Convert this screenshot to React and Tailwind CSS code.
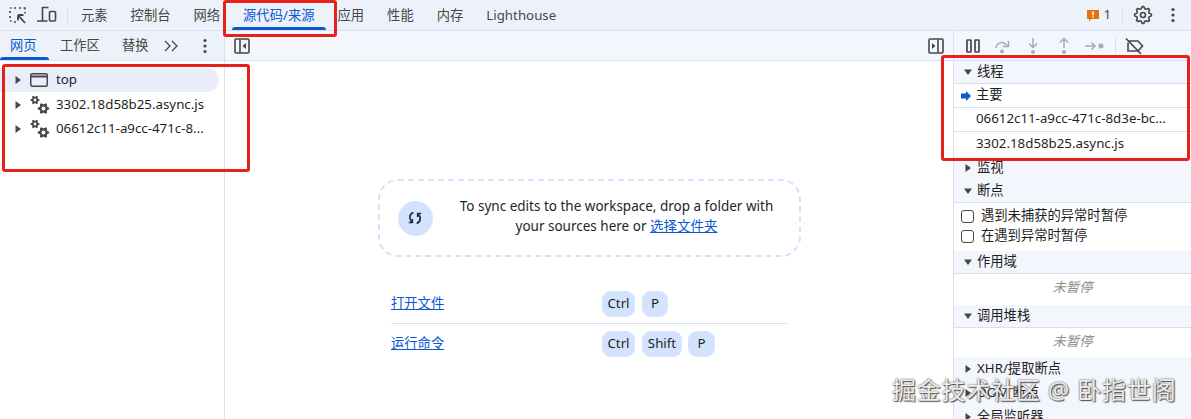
const FONT = "font-['Noto_Sans','Noto_Sans_CJK_SC',sans-serif]";

const topTabs = [
  { label: '元素' },
  { label: '控制台' },
  { label: '网络' },
  { label: '源代码/来源', active: true },
  { label: '应用' },
  { label: '性能' },
  { label: '内存' },
  { label: 'Lighthouse' },
];

// toothed wheel outline, used for the settings gear and the tree icons
const gearPath = (cx, cy, outer, inner, teeth) => {
  const pts = [];
  for (let i = 0; i < teeth * 4; i++) {
    const r = i % 4 < 2 ? outer : inner;
    const a = ((i - 0.5) / (teeth * 4)) * Math.PI * 2;
    pts.push(`${(cx + r * Math.cos(a)).toFixed(2)} ${(cy + r * Math.sin(a)).toFixed(2)}`);
  }
  return `M${pts.join('L')}Z`;
};

function Dots({ className = '' }) {
  return (
    <svg width="4" height="16" viewBox="0 0 4 16" className={`shrink-0 ${className}`} fill="#474747">
      <circle cx="2" cy="2.5" r="1.6" />
      <circle cx="2" cy="8" r="1.6" />
      <circle cx="2" cy="13.5" r="1.6" />
    </svg>
  );
}

function Caret({ open = false }) {
  return (
    <svg width="8" height="8" viewBox="0 0 8 8" fill="#474747" className="shrink-0">
      {open ? <path d="M0 1.5h8L4 7z" /> : <path d="M1.5 0v8L7 4z" />}
    </svg>
  );
}

function Gears() {
  return (
    <svg width="20" height="20" viewBox="0 0 20 20" className="shrink-0" fill="none" stroke="#474747">
      <path d={gearPath(5, 5, 4.6, 3.2, 6)} fill="#474747" stroke="none" />
      <circle cx="5" cy="5" r="1.4" fill="#fff" stroke="none" />
      <path d={gearPath(13.5, 13.5, 5.8, 4.2, 6)} fill="#474747" stroke="none" />
      <circle cx="13.5" cy="13.5" r="2" fill="#fff" stroke="none" />
    </svg>
  );
}

function TreeRow({ label, icon, active }) {
  return (
    <div className={`flex h-6 items-center pl-[14px] ${active ? 'mb-px w-[219px] rounded-r-full bg-[#e9eef9]' : ''}`}>
      <Caret />
      <div className="ml-[8px] flex w-[26px]">{icon}</div>
      <span className="truncate pb-px">{label}</span>
    </div>
  );
}

function SectionHead({ label, open, short }) {
  return (
    <div className={`flex shrink-0 items-center bg-[#f3f6fc] pl-[10px] ${short ? 'h-[23px]' : 'h-6'} ${open ? 'border-b border-[#d9dfee]' : ''}`}>
      <Caret open={open} />
      <span className="ml-[5px] pb-px">{label}</span>
    </div>
  );
}

function Key({ width, children }) {
  return <span className={`flex h-[26px] items-center justify-center rounded-[9px] bg-[#d3e3fd] text-[#1f1f1f] ${width}`}>{children}</span>;
}

function CheckRow({ label }) {
  return (
    <div className="flex h-[20px] items-center pl-[7px]">
      <span className="h-[13px] w-[13px] rounded-[3px] border border-[#474747]" />
      <span className="ml-[7px]">{label}</span>
    </div>
  );
}

export default function App() {
  return (
    <div className={`relative flex h-[419px] w-[1191px] flex-col overflow-hidden bg-white text-[13.3px] text-[#1f1f1f] ${FONT}`}>
      {/* main toolbar */}
      <div className="flex h-[31px] shrink-0 items-center border-b border-[#d9dfee] bg-[#edf2fa]">
        <div className="flex w-[69.5px] shrink-0 items-center pl-[9px] text-[#474747]">
          <svg width="18" height="18" viewBox="0 0 18 18" fill="none" stroke="currentColor" strokeWidth="1.6" className="shrink-0">
            <path d="M1 2h1.500M5 2h2M10 2h2M14.500 2H16v1.500M1 5v2M1 10v2M1 15h1.500M5 16h2M16 6v1.500" />
            <path d="M9 9l7 8M9 9v5.500M9 9h5.500" strokeWidth="1.800" />
          </svg>
          <svg width="20" height="18" viewBox="0 0 20 18" fill="none" stroke="currentColor" strokeWidth="1.6" className="ml-[10px] shrink-0">
            <path d="M11.500 1.500H5.500V15M0 15h10.500" />
            <rect x="12.500" y="5.500" width="6" height="9.500" rx="1" />
          </svg>
          <span className="ml-[10px] h-4 w-px shrink-0 bg-[#d9dfee]" />
        </div>
        {topTabs.map(t => (
          <div key={t.label} className={`relative flex h-[30px] items-center px-[11.5px] pt-[2px] ${t.active ? 'text-[#0b57d0]' : 'text-[#474747]'}`}>
            {t.label}
            {t.active && <span className="absolute bottom-0 left-0 right-0 h-[3px] rounded-t-[3px] bg-[#0b57d0]" />}
          </div>
        ))}
        <div className="ml-auto flex items-center text-[#474747]">
          <svg width="12" height="13" viewBox="0 0 12 13" className="shrink-0">
            <path d="M0 1h12v9H4l-2 2.500V10H0z" fill="#e8710a" />
            <path d="M5.200 2.500h1.600v4H5.200zM5.200 7.200h1.600v1.400H5.200z" fill="#fff" />
          </svg>
          <span className="ml-[4px]">1</span>
          <span className="ml-[11px] h-4 w-px bg-[#d9dfee]" />
          <svg width="20" height="20" viewBox="0 0 20 20" fill="none" stroke="currentColor" strokeWidth="1.600" className="ml-[10px] shrink-0">
            <circle cx="10" cy="10" r="2.500" />
            <path d={gearPath(10, 10, 8.400, 6.400, 8)} strokeLinejoin="round" />
          </svg>
          <Dots className="ml-[18px] mr-[16px]" />
        </div>
      </div>

      <div className="flex min-h-0 flex-1">
        {/* navigator */}
        <div className="flex w-[225px] shrink-0 flex-col border-r border-[#d9dfee]">
          <div className="flex h-[30px] shrink-0 items-center border-b border-[#d9dfee] bg-[#edf2fa]">
            <div className="relative flex h-[29px] w-[49px] items-center pl-[10px] text-[#0b57d0]">
              网页
              <span className="absolute bottom-0 left-0 right-0 h-[3px] rounded-t-[3px] bg-[#0b57d0]" />
            </div>
            <span className="ml-[11px] text-[#474747]">工作区</span>
            <span className="ml-[22px] text-[#474747]">替换</span>
            <svg width="14" height="12" viewBox="0 0 14 12" fill="none" stroke="#474747" strokeWidth="1.300" className="ml-[16px] shrink-0">
              <path d="M1 1l5 5-5 5M8 1l5 5-5 5" />
            </svg>
            <Dots className="ml-[25px]" />
          </div>
          <div className="pt-[7px]">
            <TreeRow
              active
              label="top"
              icon={
                <svg width="18" height="14" viewBox="0 0 18 14" fill="none" stroke="#474747" strokeWidth="1.500">
                  <rect x="0.750" y="0.750" width="16.500" height="12.500" rx="1.500" />
                  <path d="M1 3.500h16" strokeWidth="2" />
                </svg>
              }
            />
            <TreeRow label="3302.18d58b25.async.js" icon={<Gears />} />
            <TreeRow label="06612c11-a9cc-471c-8..." icon={<Gears />} />
          </div>
        </div>

        {/* editor */}
        <div className="flex min-w-0 flex-1 flex-col">
          <div className="flex h-[30px] shrink-0 items-center justify-between border-b border-[#d9dfee] bg-[#f3f6fc] px-[9px] text-[#474747]">
            <svg width="16" height="16" viewBox="0 0 16 16" fill="none" stroke="currentColor" strokeWidth="1.600" className="shrink-0">
              <rect x="1" y="1" width="14" height="14" rx="1" />
              <path d="M6 1.500v13" />
              <path d="M12 5v6L8.500 8z" fill="currentColor" stroke="none" />
            </svg>
            <svg width="16" height="16" viewBox="0 0 16 16" fill="none" stroke="currentColor" strokeWidth="1.600" className="shrink-0">
              <rect x="1" y="1" width="14" height="14" rx="1" />
              <path d="M10 1.500v13" />
              <path d="M4 5v6l3.500-3z" fill="currentColor" stroke="none" />
            </svg>
          </div>
          <div className="flex flex-1 flex-col items-center pt-[118px]">
            <div className="flex h-[78px] w-[423px] items-center rounded-[20px] border-2 border-dashed border-[#d3e3fd] pl-[18px] pr-[23px]">
              <span className="flex h-[35px] w-[35px] shrink-0 items-center justify-center rounded-full bg-[#d3e3fd]">
                <svg width="16" height="16" viewBox="0 0 16 16" fill="none" stroke="#1f2a44" strokeWidth="1.700">
                  <path d="M6.300 2.500C2.500 4 1.500 8.500 4.800 12" />
                  <path d="M1.800 12.500h3.500V9" />
                  <path d="M9.700 13.500c3.800-1.500 4.800-6 1.500-9.500" />
                  <path d="M14.200 3.500h-3.500V7" />
                </svg>
              </span>
              <p className="ml-[25px] pb-[5px] text-center text-[13.5px] leading-5">
                To sync edits to the workspace, drop a folder with your sources here or{' '}
                <span className="text-[#0b57d0] underline">选择文件夹</span>
              </p>
            </div>
            <div className="mt-[27px] w-[396px]">
              <div className="flex h-[40px] items-center border-b border-[#d9dfee]">
                <span className="w-[211px] text-[#0b57d0] underline">打开文件</span>
                <div className="flex gap-[7px]">
                  <Key width="w-[33px]">Ctrl</Key>
                  <Key width="w-[26px]">P</Key>
                </div>
              </div>
              <div className="flex h-[40px] items-center">
                <span className="w-[211px] text-[#0b57d0] underline">运行命令</span>
                <div className="flex gap-[7px]">
                  <Key width="w-[33px]">Ctrl</Key>
                  <Key width="w-[40px]">Shift</Key>
                  <Key width="-ml-px w-[27px]">P</Key>
                </div>
              </div>
            </div>
          </div>
        </div>

        {/* debugger sidebar */}
        <div className="flex w-[238px] shrink-0 flex-col overflow-hidden border-l border-[#d9dfee]">
          <div className="flex h-[30px] shrink-0 items-center border-b border-[#d9dfee] bg-[#f3f6fc] text-[#474747]">
            <svg width="14" height="14" viewBox="0 0 14 14" fill="none" stroke="#474747" strokeWidth="1.700" className="ml-[12px] shrink-0">
              <rect x="1" y="1" width="4" height="12" rx="0.500" />
              <rect x="9" y="1" width="4" height="12" rx="0.500" />
            </svg>
            <svg width="18" height="18" viewBox="0 0 18 18" fill="none" stroke="#a8abb3" strokeWidth="1.500" className="ml-[13px] shrink-0">
              <path d="M3 11c.5-5 6-7.500 10-3.500l2 2" />
              <path d="M15.500 4v5.500H10" />
              <circle cx="9" cy="14.500" r="2" fill="#a8abb3" stroke="none" />
            </svg>
            <svg width="14" height="18" viewBox="0 0 14 18" fill="none" stroke="#a8abb3" strokeWidth="1.500" className="ml-[15px] shrink-0">
              <path d="M7 1v9M3 6.500L7 10.500l4-4" />
              <circle cx="7" cy="15" r="2" fill="#a8abb3" stroke="none" />
            </svg>
            <svg width="14" height="18" viewBox="0 0 14 18" fill="none" stroke="#a8abb3" strokeWidth="1.500" className="ml-[17px] shrink-0">
              <path d="M7 11V2M3 5.500L7 1.500l4 4" />
              <circle cx="7" cy="15" r="2" fill="#a8abb3" stroke="none" />
            </svg>
            <svg width="20" height="12" viewBox="0 0 20 12" fill="none" stroke="#a8abb3" strokeWidth="1.500" className="ml-[14px] shrink-0">
              <path d="M0 6h10M6.500 2.500L10 6l-3.500 3.500" />
              <circle cx="16" cy="6" r="2.500" fill="#a8abb3" stroke="none" />
            </svg>
            <span className="ml-[10px] h-4 w-px bg-[#d9dfee]" />
            <svg width="20" height="20" viewBox="0 0 20 20" fill="none" stroke="#474747" strokeWidth="1.600" className="ml-[8px] shrink-0">
              <path d="M5 5H14L18.500 10L14 15H4V6.500" />
              <path d="M2 2.500l15 15.500" />
            </svg>
          </div>
          <SectionHead label="线程" open short />
          <div className="flex h-6 shrink-0 items-center border-b border-[#d9dfee] pl-[7px]">
            <svg width="10" height="10" viewBox="0 0 10 10" fill="#0b57d0" className="shrink-0">
              <path d="M0 2.500h5V0l5 5-5 5V7.500H0z" />
            </svg>
            <span className="ml-[5px] pb-px">主要</span>
          </div>
          <div className="flex h-6 shrink-0 items-center border-b border-[#d9dfee] pl-[22px] pr-[3px]">
            <span className="truncate pb-px">06612c11-a9cc-471c-8d3e-bc...</span>
          </div>
          <div className="flex h-6 shrink-0 items-center pl-[22px]">
            <span className="pb-px">3302.18d58b25.async.js</span>
          </div>
          <SectionHead label="监视" />
          <SectionHead label="断点" open short />
          <div className="shrink-0 pb-[5px] pt-[3px]">
            <CheckRow label="遇到未捕获的异常时暂停" />
            <CheckRow label="在遇到异常时暂停" />
          </div>
          <SectionHead label="作用域" open short />
          <div className="flex h-[31px] shrink-0 items-center justify-center pb-[3px] text-[#8f8f8f] italic">未暂停</div>
          <SectionHead label="调用堆栈" open short />
          <div className="flex h-[29px] shrink-0 items-center justify-center pb-px text-[#8f8f8f] italic">未暂停</div>
          <SectionHead label="XHR/提取断点" />
          <SectionHead label="DOM 断点" />
          <SectionHead label="全局监听器" />
        </div>
      </div>

      {/* annotations on top of the screenshot */}
      <div className="absolute left-[223px] top-0 h-[37px] w-[114px] rounded-[3px] border-[3px] border-[#e8201a]" />
      <div className="absolute left-[2px] top-[64px] h-[108px] w-[248px] rounded-[3px] border-[3px] border-[#e8201a]" />
      <div className="absolute left-[941px] top-[55px] h-[106px] w-[249px] rounded-[3px] border-[3px] border-[#e8201a]" />
      <div className="absolute left-[892px] top-[376px] whitespace-nowrap text-[24px] leading-[28px] tracking-[0.8px] text-[#ececec] [text-shadow:0_0_2px_#444,1px_1px_1px_#555]">
        掘金技术社区 @ 卧指世阁
      </div>
    </div>
  );
}
